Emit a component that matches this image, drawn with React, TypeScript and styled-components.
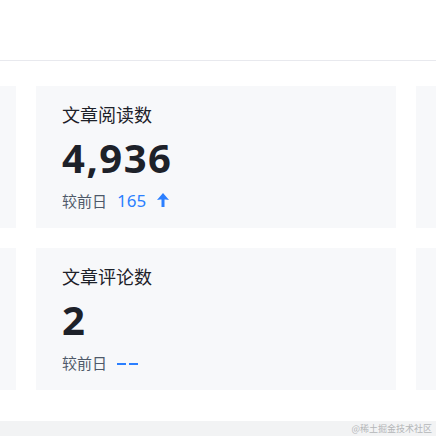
import React from "react";
import styled, { createGlobalStyle } from "styled-components";

const GlobalStyle = createGlobalStyle`
  html, body {
    margin: 0;
    padding: 0;
    background: #fff;
    overflow: hidden;
  }
  body {
    font-family: "Noto Sans", "Noto Sans CJK SC", sans-serif;
    color: #1d2129;
  }
`;

const Page = styled.div`
  width: 436px;
  height: 436px;
  display: flex;
  flex-direction: column;
  overflow: hidden;
`;

const Header = styled.div`
  height: 60px;
  flex-shrink: 0;
  border-bottom: 1px solid #e8e9ee;
`;

const Body = styled.div`
  flex: 1;
  padding-top: 25px;
`;

// the row is scrolled sideways: only the middle column is fully in view
const Grid = styled.div`
  display: grid;
  grid-template-columns: repeat(3, 360px);
  grid-auto-rows: 142px;
  gap: 20px;
  margin-left: -344px;
`;

const Card = styled.div`
  background: #f7f8fa;
  padding: 16px 26px 0;
  box-sizing: border-box;
`;

const Title = styled.div`
  font-size: 18px;
  line-height: 26px;
  color: #1d2129;
`;

const Value = styled.div`
  font-size: 40px;
  font-weight: 700;
  line-height: 48px;
  margin-top: 6px;
  color: #1d2129;
  letter-spacing: 1.5px;
`;

const Compare = styled.div`
  display: flex;
  align-items: center;
  margin-top: 6px;
  height: 24px;
`;

const CompareLabel = styled.span`
  font-size: 15px;
  color: #4e5969;
  margin-right: 10px;
`;

const Delta = styled.span`
  font-size: 17px;
  color: #2b7fff;
  margin-right: 11px;
`;

const Dashes = styled.span`
  display: flex;
  gap: 3px;
  margin-top: 4px;
  span {
    width: 9px;
    height: 2px;
    background: #2b7fff;
  }
`;

const Footer = styled.div`
  height: 15px;
  flex-shrink: 0;
  background: #f2f3f4;
  display: flex;
  justify-content: flex-end;
  align-items: center;
  padding-right: 4px;
`;

const Watermark = styled.span`
  font-size: 9px;
  color: #b4b6b8;
  font-family: "Noto Sans CJK SC", sans-serif;
`;

const ArrowUp = () => (
  <svg width="12" height="14" viewBox="0 0 12 14">
    <path d="M6 0 L12 7 Q9 6 7.5 6.6 L7.5 14 L4.5 14 L4.5 6.6 Q3 6 0 7 Z" fill="#2b7fff" />
  </svg>
);

type Stat = { title: string; value: string; delta?: string };

const stats: Stat[] = [
  { title: "文章展现数", value: "12,408", delta: "320" },
  { title: "文章阅读数", value: "4,936", delta: "165" },
  { title: "文章点赞数", value: "37" },
  { title: "粉丝数", value: "18" },
  { title: "文章评论数", value: "2" },
  { title: "文章收藏数", value: "41" },
];

const StatCard: React.FC<{ stat: Stat }> = ({ stat }) => (
  <Card>
    <Title>{stat.title}</Title>
    <Value>{stat.value}</Value>
    <Compare>
      <CompareLabel>较前日</CompareLabel>
      {stat.delta ? (
        <>
          <Delta>{stat.delta}</Delta>
          <ArrowUp />
        </>
      ) : (
        <Dashes>
          <span />
          <span />
        </Dashes>
      )}
    </Compare>
  </Card>
);

export default function App() {
  return (
    <>
      <GlobalStyle />
      <Page>
        <Header />
        <Body>
          <Grid>
            {stats.map((s) => (
              <StatCard key={s.title} stat={s} />
            ))}
          </Grid>
        </Body>
        <Footer>
          <Watermark>@稀土掘金技术社区</Watermark>
        </Footer>
      </Page>
    </>
  );
}
